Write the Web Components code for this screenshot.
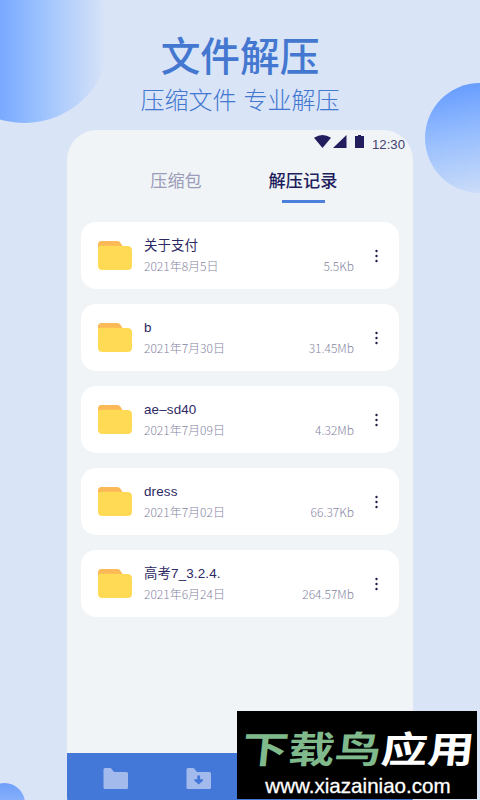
<!DOCTYPE html>
<html lang="zh-CN">
<head>
<meta charset="utf-8">
<title>文件解压</title>
<style>
html, body {
  margin: 0;
  height: 100%;
  overflow: hidden;
}
body {
  font-family: "Noto Sans CJK SC", sans-serif;
}
</style>
</head>
<body>
<promo-page>
  <promo-heading slot="heading">文件解压<span slot="sub">压缩文件 专业解压</span></promo-heading>
  <phone-screen>
    <status-bar slot="status" time="12:30"></status-bar>
    <tab-bar slot="tabs">
      <tab-item>压缩包</tab-item>
      <tab-item active>解压记录</tab-item>
    </tab-bar>
    <file-card date="2021年8月5日" size="5.5Kb">关于支付</file-card>
    <file-card date="2021年7月30日" size="31.45Mb">b</file-card>
    <file-card date="2021年7月09日" size="4.32Mb">ae–sd40</file-card>
    <file-card date="2021年7月02日" size="66.37Kb">dress</file-card>
    <file-card date="2021年6月24日" size="264.57Mb">高考7_3.2.4.</file-card>
    <bottom-nav slot="nav"></bottom-nav>
  </phone-screen>
  <site-badge slot="badge" url="www.xiazainiao.com"><span slot="green">下载鸟</span>应用</site-badge>
</promo-page>

<script>
class BaseElement extends HTMLElement {
  constructor() {
    super();
    this.attachShadow({ mode: 'open' });
  }

  connectedCallback() {
    this.shadowRoot.innerHTML = this.template();
  }
}

class PromoPage extends BaseElement {
  template() {
    return `
      <style>
        :host {
          display: flex;
          flex-direction: column;
          align-items: center;
          position: relative;
          width: 480px;
          height: 800px;
          overflow: hidden;
          background: #d9e4f7;
        }
        .bubble {
          position: absolute;
          border-radius: 50%;
        }
        .b1 {
          left: -61px; top: -48px; width: 171px; height: 171px;
          background: linear-gradient(90deg, #78a8ff 35%, #9cc3fd 60%, #bdd4fa 80%, #d9e4f7 98%);
        }
        .b2 {
          left: 425px; top: 83px; width: 110px; height: 110px;
          background: linear-gradient(170deg, #669cff 5%, #9cc1fd 50%, #d3e1f8 100%);
        }
        .b3 {
          left: -16px; top: 783px; width: 41px; height: 41px;
          background: linear-gradient(180deg, #6f9ffb, #a8c7fc);
        }
      </style>
      <div class="bubble b1"></div>
      <div class="bubble b2"></div>
      <div class="bubble b3"></div>
      <slot name="heading"></slot>
      <slot></slot>
      <slot name="badge"></slot>
    `;
  }
}

class PromoHeading extends BaseElement {
  template() {
    return `
      <style>
        :host {
          display: flex;
          flex: none;
          flex-direction: column;
          align-items: center;
          box-sizing: border-box;
          height: 130px;
          padding-top: 30px;
          color: #4377d0;
          position: relative;
        }
        .title {
          font-size: 39.700px;
          font-weight: 500;
          line-height: 48px;
        }
        .sub {
          font-size: 24px;
          font-weight: 300;
          line-height: 36px;
          margin-top: 3px;
          word-spacing: 1.500px;
        }
      </style>
      <div class="title"><slot></slot></div>
      <div class="sub"><slot name="sub"></slot></div>
    `;
  }
}

class PhoneScreen extends BaseElement {
  template() {
    return `
      <style>
        :host {
          display: flex;
          flex-direction: column;
          flex: none;
          width: 346px;
          height: 696px;
          border-radius: 30px;
          overflow: hidden;
          position: relative;
          background: #f0f4f7;
        }
        .list {
          display: flex;
          flex-direction: column;
          gap: 14.500px;
          padding: 19.700px 14px 0;
          flex: 1;
        }
      </style>
      <slot name="status"></slot>
      <slot name="tabs"></slot>
      <div class="list"><slot></slot></div>
      <slot name="nav"></slot>
    `;
  }
}

class StatusBar extends BaseElement {
  template() {
    return `
      <style>
        :host {
          display: flex;
          justify-content: flex-end;
          height: 28px;
          padding-right: 8px;
          color: #45426f;
          font: 13.200px/30px "Liberation Sans", sans-serif;
        }
        svg { display: block; margin: 4px 6px 0 0; }
      </style>
      <svg width="52" height="16" viewBox="0 0 52 16" fill="#221d5c">
        <path d="M0 3.800Q8.500 -1.800 17 3.800L8.500 14Z"/>
        <path d="M32.500 1V14H19Z"/>
        <path d="M44 1h3v1h3v12h-9V2h3z"/>
      </svg>
      <span>${this.getAttribute('time')}</span>
    `;
  }
}

class TabBar extends BaseElement {
  template() {
    return `
      <style>
        :host {
          display: grid;
          grid-template-columns: 92px 92px;
          column-gap: 35px;
          padding-left: 63px;
          height: 44px;
        }
      </style>
      <slot></slot>
    `;
  }
}

class TabItem extends BaseElement {
  template() {
    return `
      <style>
        :host {
          display: flex;
          flex-direction: column;
          align-items: center;
          font-size: 17.200px;
          line-height: 26px;
          padding-top: 9px;
          color: #9c9bb8;
        }
        :host([active]) {
          color: #221d5c;
          font-weight: 500;
        }
        .line {
          width: 43px;
          height: 2.500px;
          margin-top: 7px;
        }
        :host([active]) .line { background: #4c7fdb; }
      </style>
      <span><slot></slot></span>
      <div class="line"></div>
    `;
  }
}

class FileCard extends BaseElement {
  template() {
    return `
      <style>
        :host {
          display: flex;
          box-sizing: border-box;
          height: 67.500px;
          padding: 0 20px 0 17px;
          border-radius: 15px;
          background: #fff;
        }
        .folder { margin: 18.300px 12px 0 0; flex: none; }
        .info {
          flex: 1;
          padding-top: 14.300px;
        }
        .name {
          font-family: "Liberation Sans", "Noto Sans CJK SC", sans-serif;
          font-size: 13.400px;
          letter-spacing: 0.150px;
          line-height: 20px;
          color: #2c2862;
        }
        .meta {
          display: flex;
          justify-content: space-between;
          font-size: 12px;
          font-weight: 300;
          line-height: 20px;
          color: #85849f;
        }
        .more { margin: 27.300px 0 0 20px; flex: none; }
      </style>
      <svg class="folder" width="34" height="31" viewBox="0 0 34 31">
        <path fill="#fbb957" d="M0 9V4.500Q0 1 3.500 1H19Q21.500 1 22.700 3L25 7V11H0Z"/>
        <path fill="#ffda54" d="M0 8Q0 5.800 3 5.800H22.500Q24 5.800 25.500 6H29.500Q34 6 34 10.500V25.500Q34 30 29.500 30H4.500Q0 30 0 25.500Z"/>
      </svg>
      <div class="info">
        <div class="name"><slot></slot></div>
        <div class="meta">
          <span>${this.getAttribute('date')}</span>
          <span>${this.getAttribute('size')}</span>
        </div>
      </div>
      <svg class="more" width="5" height="14" viewBox="0 0 5 14" fill="#221d48">
        <circle cx="2.500" cy="2" r="1.200"/>
        <circle cx="2.500" cy="7" r="1.200"/>
        <circle cx="2.500" cy="12" r="1.200"/>
      </svg>
    `;
  }
}

class BottomNav extends BaseElement {
  template() {
    return `
      <style>
        :host {
          display: flex;
          box-sizing: border-box;
          gap: 57px;
          height: 73px;
          padding: 15px 0 0 36px;
          background: #4377d8;
        }
      </style>
      <svg width="26" height="21" viewBox="0 0 26 21">
        <path fill="#a3bbec" d="M0.500 1.500Q0.500 0 2 0H7Q8 0 8.500 .8L11 4H23.500Q25 4 25 5.500V19.500Q25 21 23.500 21H2Q0.500 21 0.500 19.500Z"/>
      </svg>
      <svg width="26" height="21" viewBox="0 0 26 21">
        <path fill="#a3bbec" d="M0.500 1.500Q0.500 0 2 0H7Q8 0 8.500 .8L11 4H23.500Q25 4 25 5.500V19.500Q25 21 23.500 21H2Q0.500 21 0.500 19.500Z"/>
        <path fill="#4377d8" d="M11.300 7.500h2.800v3.800h2.900v1.500l-4.300 3.800-4.300-3.800v-1.500h2.900z"/>
      </svg>
    `;
  }
}

class SiteBadge extends BaseElement {
  template() {
    return `
      <style>
        :host {
          display: flex;
          flex-direction: column;
          align-items: center;
          position: absolute;
          left: 237px;
          top: 711px;
          width: 240px;
          height: 88px;
          background: #000;
          color: #fff;
        }
        .name {
          font-size: 43px;
          font-weight: 700;
          line-height: 48px;
          height: 48px;
          margin-top: 12px;
          white-space: nowrap;
          transform: translateX(1px) skewX(-6deg) scale(1.080, 0.860);
        }
        .green { color: #7fb98c; }
        .url {
          font: 20.600px/24px "Liberation Sans", sans-serif;
          -webkit-text-stroke: 0.3px #fff;
          margin: 3px 0 0 2px;
        }
      </style>
      <div class="name"><span class="green"><slot name="green"></slot></span><slot></slot></div>
      <div class="url">${this.getAttribute('url')}</div>
    `;
  }
}

customElements.define('promo-page', PromoPage);
customElements.define('promo-heading', PromoHeading);
customElements.define('phone-screen', PhoneScreen);
customElements.define('status-bar', StatusBar);
customElements.define('tab-bar', TabBar);
customElements.define('tab-item', TabItem);
customElements.define('file-card', FileCard);
customElements.define('bottom-nav', BottomNav);
customElements.define('site-badge', SiteBadge);
</script>
</body>
</html>
